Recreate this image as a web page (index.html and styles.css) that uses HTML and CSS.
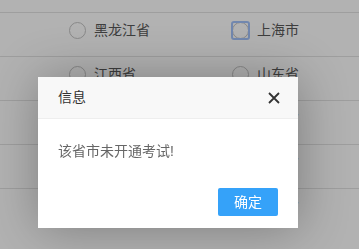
FILE: index.html
```html
<!DOCTYPE html>
<html lang="zh-CN">
<head>
<meta charset="utf-8">
<link rel="stylesheet" href="styles.css">
</head>
<body>
<div class="list">
  <div class="row"></div>
  <div class="row">
    <label class="opt"><span class="radio"></span><span>黑龙江省</span></label>
    <label class="opt"><span class="radio focus"></span><span>上海市</span></label>
  </div>
  <div class="row">
    <label class="opt"><span class="radio"></span><span>江西省</span></label>
    <label class="opt"><span class="radio"></span><span>山东省</span></label>
  </div>
  <div class="row">
    <label class="opt"><span class="radio"></span><span>河南省</span></label>
    <label class="opt"><span class="radio"></span><span>湖北省</span></label>
  </div>
  <div class="row">
    <label class="opt"><span class="radio"></span><span>湖南省</span></label>
    <label class="opt"><span class="radio"></span><span>广东省</span></label>
  </div>
  <div class="row">
    <label class="opt"><span class="radio"></span><span>四川省</span></label>
    <label class="opt"><span class="radio"></span><span>贵州省</span></label>
  </div>
</div>
<div class="shade"></div>
<div class="layer">
  <div class="layer-title">
    <span>信息</span>
    <svg class="close" width="12" height="12" viewBox="0 0 12 12"><path d="M1 1L11 11M11 1L1 11" stroke="#333" stroke-width="1.8" fill="none"/></svg>
  </div>
  <div class="layer-content">该省市未开通考试!</div>
  <div class="layer-btns"><a class="btn">确定</a></div>
</div>
</body>
</html>
```
FILE: styles.css
```css
html, body {
  margin: 0;
  padding: 0;
  height: 249px;
  background: #fff;
  font-family: "Liberation Sans", "Noto Sans CJK SC", sans-serif;
  font-size: 14px;
  overflow: hidden;
}
.list {
  margin-top: -32px;
}
.row {
  height: 43px;
  border-top: 1px solid #e2e2e2;
  display: flex;
  align-items: flex-start;
  padding-left: 69px;
  overflow: hidden;
}
.opt {
  display: flex;
  align-items: center;
  flex: none;
  height: 18px;
  margin-top: 8px;
  width: 163px;
  color: #595959;
  line-height: 18px;
}
.radio {
  width: 15px;
  height: 15px;
  border: 1px solid #c4c4c4;
  border-radius: 50%;
  margin-right: 8px;
  position: relative;
  flex: none;
}
.radio.focus::after {
  content: "";
  position: absolute;
  left: -2px;
  top: -2px;
  width: 15px;
  height: 15px;
  border: 2px solid #a3c2fa;
  border-radius: 3px;
}
.shade {
  position: fixed;
  inset: 0;
  background: rgba(0, 0, 0, 0.3);
}
.layer {
  position: absolute;
  left: 38px;
  top: 77px;
  width: 260px;
  background: #fff;
  box-shadow: 1px 1px 50px rgba(0, 0, 0, 0.3);
}
.layer-title {
  height: 41px;
  line-height: 41px;
  border-bottom: 1px solid #eee;
  background: #f8f8f8;
  padding: 0 18px 0 20px;
  color: #333;
  display: flex;
  align-items: center;
  justify-content: space-between;
}
.close {
  display: block;
  margin-top: 1px;
}
.layer-content {
  padding: 20px;
  line-height: 24px;
  color: #666;
}
.layer-btns {
  display: flex;
  justify-content: flex-end;
  padding: 0 20px 12px;
}
.btn {
  margin-top: 5px;
  width: 60px;
  height: 28px;
  line-height: 28px;
  text-align: center;
  background: #35a2f9;
  color: #fff;
  border-radius: 2px;
}
```
